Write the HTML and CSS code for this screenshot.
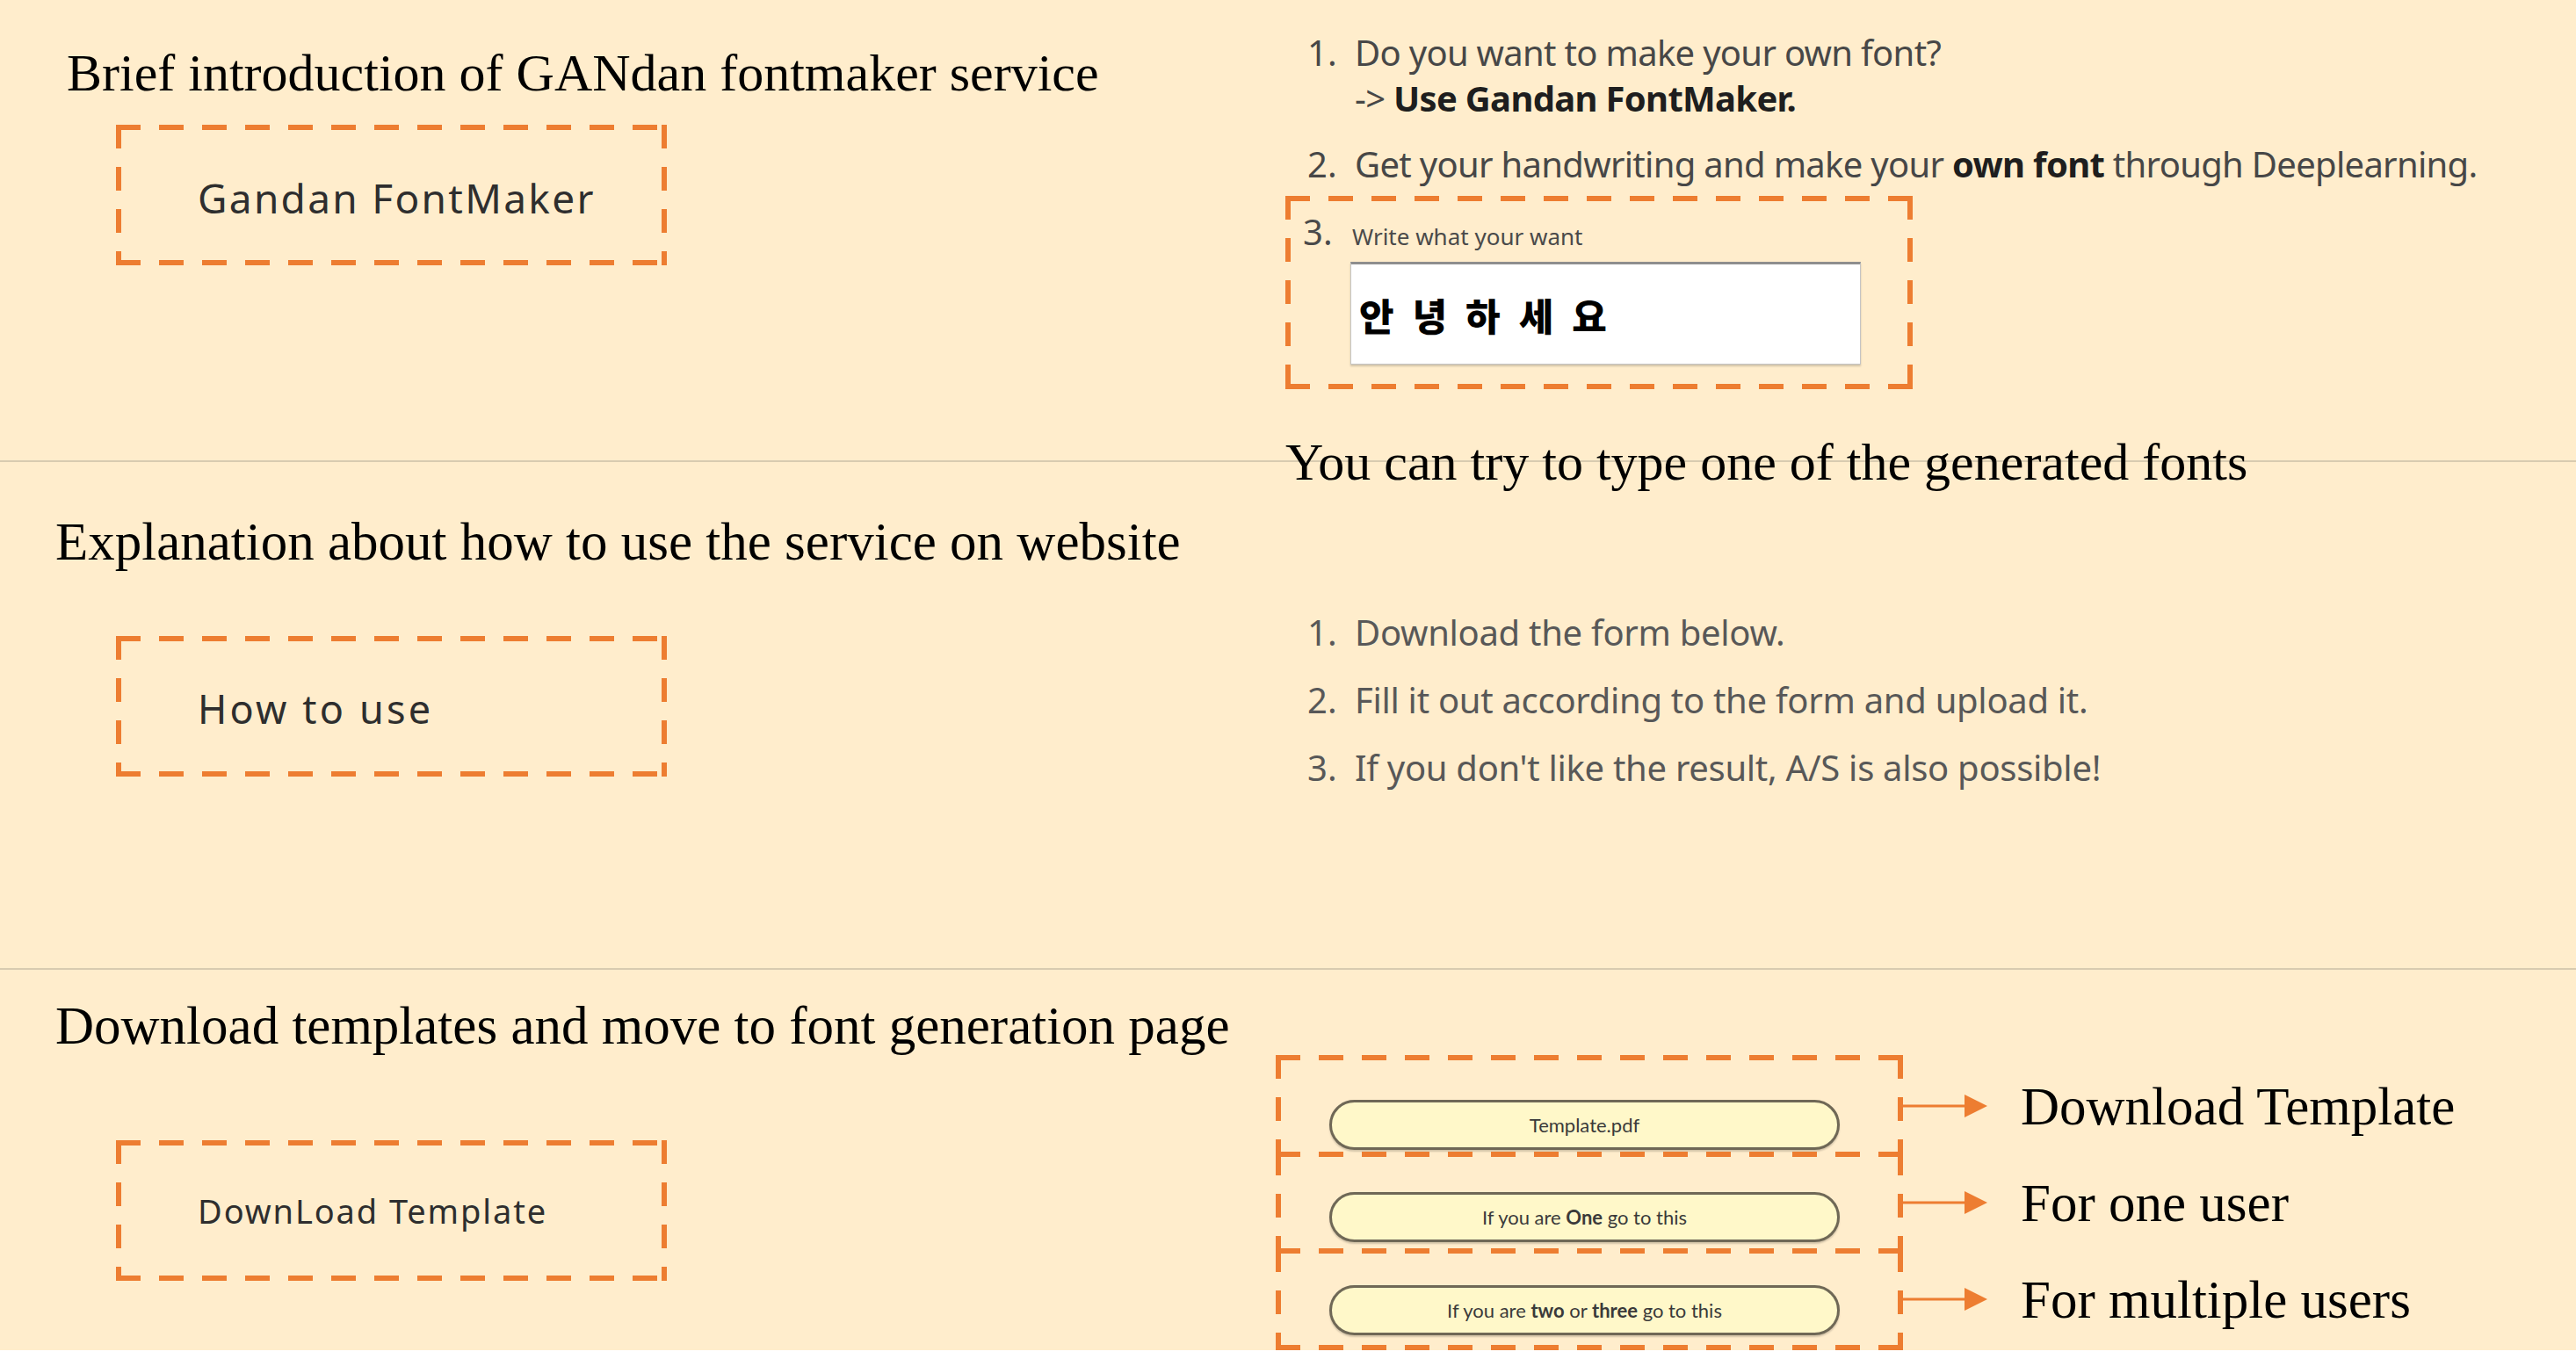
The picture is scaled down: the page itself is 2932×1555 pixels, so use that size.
FILE: index.html
```html
<!DOCTYPE html>
<html lang="en">
<head>
<meta charset="utf-8">
<title>GANdan FontMaker – overview</title>
<link rel="stylesheet" href="styles.css">
</head>
<body>
<main class="page">
  <section class="sec sec-intro">
    <div class="col-left">
      <h2 class="title title-first">Brief introduction of GANdan fontmaker service</h2>
      <div class="tag dashed tag-intro">Gandan FontMaker</div>
    </div>
    <div class="col-right">
      <ol class="steps steps-intro">
        <li class="step"><span class="num">1.</span><span class="body">Do you want to make your own font?<br>-&gt; <strong>Use Gandan FontMaker.</strong></span></li>
        <li class="step"><span class="num">2.</span><span class="body">Get your handwriting and make your <strong>own font</strong> through Deeplearning.</span></li>
      </ol>
      <div class="try-box dashed">
        <div class="try-head"><span class="try-num">3.</span><span class="try-label">Write what your want</span></div>
        <div class="try-input">안녕하세요</div>
      </div>
      <h2 class="title title-try">You can try to type one of the generated fonts</h2>
    </div>
  </section>
  <hr class="divider">
  <section class="sec sec-how">
    <div class="col-left">
      <h2 class="title title-how">Explanation about how to use the service on website</h2>
      <div class="tag dashed tag-how">How to use</div>
    </div>
    <div class="col-right">
      <ol class="steps steps-how">
        <li class="step"><span class="num">1.</span><span class="body">Download the form below.</span></li>
        <li class="step"><span class="num">2.</span><span class="body">Fill it out according to the form and upload it.</span></li>
        <li class="step"><span class="num">3.</span><span class="body">If you don't like the result, A/S is also possible!</span></li>
      </ol>
    </div>
  </section>
  <hr class="divider">
  <section class="sec sec-download">
    <div class="col-left">
      <h2 class="title title-download">Download templates and move to font generation page</h2>
      <div class="tag dashed tag-download">DownLoad Template</div>
    </div>
    <div class="col-right slots">
      <div class="slot-row">
        <div class="slot dashed slot-1"><div class="btn">Template.pdf</div></div>
        <svg class="arrow" width="98" height="28" viewBox="0 0 98 28" aria-hidden="true"><line x1="0" y1="14" x2="74" y2="14" stroke="#ED7D31" stroke-width="3"/><polygon points="72,1 98,14 72,27" fill="#ED7D31"/></svg>
        <span class="slot-label">Download Template</span>
      </div>
      <div class="slot-row">
        <div class="slot dashed slot-2"><div class="btn">If you are <b>One</b> go to this</div></div>
        <svg class="arrow" width="98" height="28" viewBox="0 0 98 28" aria-hidden="true"><line x1="0" y1="14" x2="74" y2="14" stroke="#ED7D31" stroke-width="3"/><polygon points="72,1 98,14 72,27" fill="#ED7D31"/></svg>
        <span class="slot-label">For one user</span>
      </div>
      <div class="slot-row">
        <div class="slot dashed slot-3"><div class="btn">If you are <b>two</b> or <b>three</b> go to this</div></div>
        <svg class="arrow" width="98" height="28" viewBox="0 0 98 28" aria-hidden="true"><line x1="0" y1="14" x2="74" y2="14" stroke="#ED7D31" stroke-width="3"/><polygon points="72,1 98,14 72,27" fill="#ED7D31"/></svg>
        <span class="slot-label">For multiple users</span>
      </div>
    </div>
  </section>
</main>
</body>
</html>
```

FILE: styles.css
```css
:root {
  --peach: #FFEDCC;
  --orange: #ED7D31;
}

html, body {
  margin: 0;
  padding: 0;
  background: #ffffff;
}

.page {
  background: var(--peach);
  height: 1537px;
  overflow: hidden;
  font-family: "Noto Sans", "Noto Sans CJK KR", sans-serif;
}

.sec {
  display: grid;
  grid-template-columns: 1463px 1fr;
  box-sizing: border-box;
}

.sec-intro { height: 524px; }
.sec-how { height: 576px; }
.sec-download { height: 433px; }

.divider {
  margin: 0;
  border: 0;
  height: 2px;
  background: #d8cbb0;
}

.col-left {
  padding-left: 63px;
  min-width: 0;
}

.col-right {
  min-width: 0;
}

/* serif headings */
.title {
  margin: 0;
  font-family: "Liberation Serif", "Times New Roman", serif;
  font-weight: 400;
  font-size: 60px;
  line-height: 60px;
  color: #000;
  white-space: nowrap;
}

.title-first { margin: 53px 0 0 13px; }
.title-how { margin-top: 61px; font-size: 61px; }
.title-download { margin-top: 34px; font-size: 61px; }
.title-try { margin-top: 53px; }

/* dashed orange outline */
.dashed {
  background:
    repeating-linear-gradient(90deg, var(--orange) 0 28px, transparent 28px 49px) left top / 100% 6px no-repeat,
    repeating-linear-gradient(90deg, var(--orange) 0 28px, transparent 28px 49px) left bottom / 100% 6px no-repeat,
    repeating-linear-gradient(180deg, var(--orange) 0 27px, transparent 27px 48px) left top / 6px 100% no-repeat,
    repeating-linear-gradient(180deg, var(--orange) 0 27px, transparent 27px 48px) right top / 6px 100% no-repeat;
}

.tag {
  margin-left: 69px;
  width: 627px;
  height: 160px;
  box-sizing: border-box;
  display: flex;
  align-items: center;
  padding-left: 93px;
  color: #2e2e2e;
  letter-spacing: 0.05em;
  white-space: nowrap;
}

.tag-intro { margin-top: 29px; font-size: 46px; padding-top: 6px; }
.tag-how { margin-top: 77px; font-size: 45px; padding-top: 4px; letter-spacing: 0.07em; }
.tag-download { margin-top: 100px; font-size: 38px; }

/* numbered steps */
.steps {
  list-style: none;
  margin: 0;
  padding: 0 0 0 25px;
  font-size: 40px;
  line-height: 52px;
  color: #474747;
}

.steps strong { color: #1e1e1e; font-weight: 700; }

.step {
  display: flex;
  white-space: nowrap;
}

.body { letter-spacing: -0.7px; }

.num {
  flex: none;
  width: 54px;
}

.steps-intro { padding-top: 34px; }
.steps-intro .step + .step { margin-top: 23px; }

.steps-how { padding-top: 168px; color: #585858; }
.steps-how .step + .step { margin-top: 25px; }
.steps-how .body { letter-spacing: -0.3px; }

/* try box */
.try-box {
  width: 714px;
  height: 220px;
  box-sizing: border-box;
  margin-top: 10px;
  padding: 21px 0 0 20px;
}

.try-head {
  display: flex;
  align-items: baseline;
  height: 40px;
  color: #4a4a4a;
}

.try-num {
  width: 56px;
  font-size: 40px;
  line-height: 40px;
}

.try-label {
  font-size: 26px;
  line-height: 26px;
}

.try-input {
  margin: 14px 0 0 54px;
  width: 581px;
  height: 117px;
  box-sizing: border-box;
  background: #fff;
  border: 1px solid #c4c4c4;
  border-top: 3px solid #8e8e8e;
  box-shadow: 0 2px 2px rgba(0, 0, 0, 0.18);
  display: flex;
  align-items: center;
  padding-left: 9px;
  font-family: "Noto Sans CJK KR", sans-serif;
  font-weight: 900;
  font-size: 43px;
  letter-spacing: 21px;
  color: #000;
}

/* download slots */
.slots {
  margin-left: -11px;
  padding-top: 97px;
}

.slot-row {
  display: flex;
  align-items: flex-start;
}

.slot-row + .slot-row { margin-top: -6px; }

.slot {
  flex: none;
  width: 714px;
  height: 116px;
  box-sizing: border-box;
  padding-left: 61px;
}

.slot-1 { padding-top: 51px; }
.slot-2 { padding-top: 46px; }
.slot-3 { padding-top: 42px; }

.btn {
  width: 581px;
  height: 57px;
  box-sizing: border-box;
  border: 3px solid #6f6856;
  border-radius: 29px;
  background: #FFF8C9;
  box-shadow: 0 2px 2px rgba(0, 0, 0, 0.18);
  display: flex;
  align-items: center;
  justify-content: center;
  font-family: "Lato", sans-serif;
  font-size: 22px;
  color: #3a3a3a;
  white-space: pre;
}

.btn b { font-weight: 700; }

.arrow {
  flex: none;
  margin: 44px 0 0 -2px;
  display: block;
}

.slot-label {
  margin: 29px 0 0 38px;
  font-family: "Liberation Serif", "Times New Roman", serif;
  font-size: 61px;
  line-height: 60px;
  color: #000;
  white-space: nowrap;
}
```
